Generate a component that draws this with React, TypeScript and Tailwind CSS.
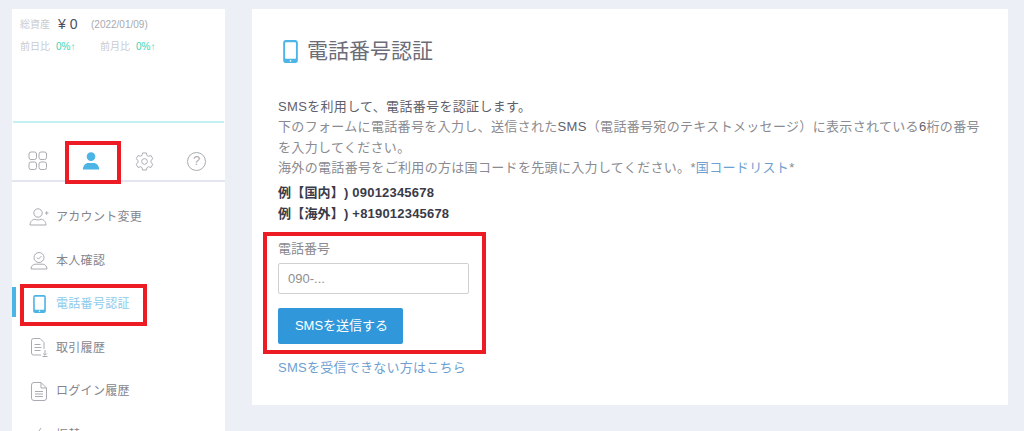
import React from "react";

const font = { fontFamily: '"Liberation Sans", "Noto Sans CJK JP", sans-serif' };

function Phone({ className }: { className: string }) {
  return (
    <svg viewBox="0 0 16 23" preserveAspectRatio="none" className={className}>
      <rect x="0.2" y="0" width="15.6" height="23" rx="2.5" fill="#4db4e6" />
      <rect x="2.2" y="2.2" width="11.6" height="16.6" rx="0.8" fill="#fff" />
      <circle cx="8" cy="20.8" r="0.9" fill="#fff" />
    </svg>
  );
}

const stroke = { fill: "none", stroke: "#a9abb0", strokeWidth: 1 };

const Grid = () => (
  <svg viewBox="0 0 20 20" className="w-5 h-5" {...stroke}>
    <rect x="1" y="1" width="7.5" height="7.5" rx="2" />
    <rect x="11" y="1" width="7.5" height="7.5" rx="2" />
    <rect x="1" y="11" width="7.5" height="7.5" rx="2" />
    <rect x="11" y="11" width="7.5" height="7.5" rx="2" />
  </svg>
);
const Person = () => (
  <svg viewBox="0 0 18 18" className="w-[18px] h-[18px]">
    <circle cx="9" cy="4.6" r="4.3" fill="#4db4e6" />
    <path d="M0.8 17.6c0-4 3-6.600 5.400-6.600h5.600c2.400 0 5.400 2.600 5.400 6.600z" fill="#4db4e6" />
  </svg>
);
const Gear = () => (
  <svg viewBox="0 0 20 20" className="w-[19px] h-[19px]" {...stroke}>
    <path d="M8 1h4l.6 2.600 1.600.9 2.600-.8 2 3.400-2 1.800v2.200l2 1.800-2 3.400-2.600-.8-1.600.9L12 19H8l-.6-2.600-1.600-.9-2.600.8-2-3.400 2-1.800V8.900l-2-1.800 2-3.400 2.600.8 1.600-.9z" strokeLinejoin="round" />
    <circle cx="10" cy="10" r="3" />
  </svg>
);
const Help = () => (
  <div className="w-[19px] h-[19px] rounded-full border border-[#a9abb0] flex items-center justify-center text-[13px] text-[#a9abb0]">?</div>
);

const AddUser = () => (
  <svg viewBox="0 0 20 18" className="w-5 h-[18px]" {...stroke}>
    <circle cx="9" cy="5" r="4.2" />
    <path d="M1 17c0-4 3-5.500 4.800-5.800 2 1 4.400 1 6.400 0 1.800.3 4.800 1.800 4.800 5.800z" strokeLinejoin="round" />
    <path d="M16 5h3.500M17.700 3.300v3.500" />
  </svg>
);
const CheckUser = () => (
  <svg viewBox="0 0 18 18" className="w-[18px] h-[18px]" {...stroke}>
    <circle cx="9" cy="5.500" r="5" />
    <path d="M6.800 5.500l1.600 1.600 3-3" />
    <path d="M1 17c0-3 2-4.500 4-4.800h8c2 .3 4 1.800 4 4.800z" strokeLinejoin="round" />
  </svg>
);
const DocDown = () => (
  <svg viewBox="0 0 18 19" className="w-[18px] h-[19px]" {...stroke}>
    <path d="M11 17H3.500A2 2 0 0 1 1.500 15V2.500A2 2 0 0 1 3.500.5H10l4 4V11" />
    <path d="M4.500 6.500h6M4.500 9.500h7M4.500 12.500h6" />
    <path d="M15 12v5M13.200 15.500l1.800 1.800 1.800-1.800M12.500 18.500h5" />
  </svg>
);
const Doc = () => (
  <svg viewBox="0 0 16 19" className="w-4 h-[19px]" {...stroke}>
    <path d="M10 .5H3A2.500 2.500 0 0 0 .5 3v13A2.500 2.500 0 0 0 3 18.500h10a2.500 2.500 0 0 0 2.500-2.500V6z" />
    <path d="M10 .5V6h5.500M4 9.500h8M4 12h8M4 14.500h8" />
  </svg>
);
const Transfer = () => (
  <svg viewBox="0 0 18 18" className="w-[18px] h-[18px]" {...stroke}>
    <path d="M2 8l3 3 6-9" />
  </svg>
);

const items = [
  { label: "アカウント変更", icon: <AddUser />, h: "h-[44px]" },
  { label: "本人確認", icon: <CheckUser />, h: "h-[43px]" },
  { label: "電話番号認証", icon: <Phone className="w-[13px] h-[18px]" />, h: "h-[44px]", active: true },
  { label: "取引履歴", icon: <DocDown />, h: "h-[43px]" },
  { label: "ログイン履歴", icon: <Doc />, h: "h-[44px]" },
  { label: "振替", icon: <Transfer />, h: "h-[44px]" },
];

function Stat({ label, w }: { label: string; w: string }) {
  return (
    <div className={`flex items-center ${w}`}>
      <span className="text-[#c9cbcf] mr-[6px]">{label}</span>
      <span className="text-[#37d6b4]">0%↑</span>
    </div>
  );
}

export default function App() {
  return (
    <div style={font} className="relative w-[1024px] h-[431px] overflow-hidden bg-[#ecf0f6] flex items-start pt-[9px] pl-[12px] [text-spacing-trim:space-all]">
      <aside className="w-[213px] shrink-0">
        <div className="bg-white h-[171px] flex flex-col">
          <div className="h-[114px] px-[7px] pt-[7px] border-b-2 border-[#c4f0f2] mx-px">
            <div className="flex items-center h-[16px] text-[10px]">
              <span className="text-[#c9cbcf] w-[38px]">総資産</span>
              <span className="text-[#4a4f66] text-[14px] w-[33px]">¥ 0</span>
              <span className="text-[#a8aab0]">(2022/01/09)</span>
            </div>
            <div className="flex items-center h-[16px] mt-[6px] text-[10px]">
              <Stat label="前日比" w="w-[80px]" />
              <Stat label="前月比" w="w-[80px]" />
            </div>
          </div>
          <div className="flex-1 flex items-center pl-[16px] pt-[19px]">
            <div className="w-[53px] flex"><Grid /></div>
            <div className="w-[53px] flex pl-[1px]"><Person /></div>
            <div className="w-[53px] flex pl-[1px]"><Gear /></div>
            <Help />
          </div>
        </div>
        <div className="h-[2px] bg-[#e3e6ee]" />
        <nav className="bg-white h-[260px] pt-[13px]">
          {items.map((it) => (
            <div key={it.label} className={`relative flex items-center ${it.h} pl-[17px]`}>
              {it.active && <div className="absolute left-0 top-[5px] w-[4px] h-[30px] bg-[#4db4e6]" />}
              <div className="w-[20px] flex justify-center mr-[7px]">{it.icon}</div>
              <span className={`text-[12px] tracking-[0.3px] ${it.active ? "text-[#8ccbec]" : "text-[#85858d]"}`}>{it.label}</span>
            </div>
          ))}
        </nav>
      </aside>

      <main className="ml-[27px] w-[756px] h-[396px] bg-white pl-[26px] pt-[28px]">
        <div className="flex items-center h-[28px]">
          <Phone className="w-[15px] h-[23px] ml-[5px] mr-[9px]" />
          <h1 className="text-[21px] text-[#6c6c78] font-normal">電話番号認証</h1>
        </div>
        <div className="mt-[32px] w-[705px] text-[13px] leading-[20.4px] tracking-[0.33px] text-[#8a8a90]">
          <p className="text-[#5f5f6b]">SMSを利用して、電話番号を認証します。</p>
          <p>下のフォームに電話番号を入力し、送信された<span className="text-[#5f5f6b]">SMS</span>（電話番号宛のテキストメッセージ）に表示されている<span className="text-[#5f5f6b]">6</span>桁の番号を入力してください。</p>
          <p>海外の電話番号をご利用の方は国コードを先頭に入力してください。*<span className="text-[#6f9fd0]">国コードリスト</span>*</p>
        </div>
        <div className="mt-[3px] text-[13px] leading-[21px] font-bold text-[#3a3a48] tracking-[0.2px]">
          <p>例【国内】) 09012345678</p>
          <p>例【海外】) +819012345678</p>
        </div>
        <label className="block mt-[15px] text-[13px] leading-[20px] text-[#8a8a90]">電話番号</label>
        <input
          readOnly
          placeholder="090-..."
          className="block mt-[4px] w-[191px] h-[31px] px-[9px] rounded-[2px] border border-[#d0d0d0] text-[13px] placeholder:text-[#8f8f8f] outline-none"
        />
        <button className="block mt-[14px] w-[125px] h-[36px] pl-[2px] rounded-[2px] bg-[#3097da] text-white text-[13px]">SMSを送信する</button>
        <a className="block mt-[14px] text-[13px] leading-[20px] tracking-[0.25px] text-[#6f9fd0]">SMSを受信できない方はこちら</a>
      </main>

      <div className="absolute left-[65px] top-[141px] w-[56px] h-[43px] border-[4px] border-[#ed1c24]" />
      <div className="absolute left-[20px] top-[284px] w-[127px] h-[42px] border-[4px] border-[#ed1c24]" />
      <div className="absolute left-[263px] top-[232px] w-[223px] h-[122px] border-[4px] border-[#ed1c24]" />
    </div>
  );
}
